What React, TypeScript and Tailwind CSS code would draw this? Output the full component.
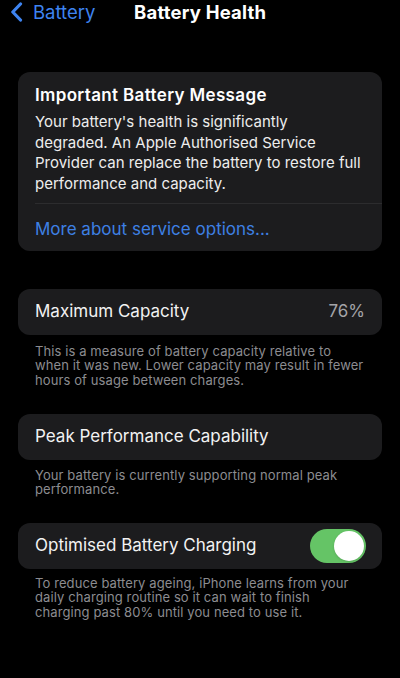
const font = { fontFamily: "Inter, 'Noto Sans', sans-serif" };

function Footer({ lines }: { lines: string[] }) {
  return (
    <p className="px-[35px] text-[13px] leading-[14.6px] tracking-[0.1px] text-[#8c8c90] whitespace-nowrap">
      {lines.map((l, i) => (
        <span key={i} className="block">
          {l}
        </span>
      ))}
    </p>
  );
}

export default function App() {
  return (
    <div
      className="w-[400px] h-[678px] bg-black text-[#f2f2f2] overflow-hidden"
      style={font}
    >
      {/* nav */}
      <div className="relative h-[24px] flex items-center">
        <div className="flex items-center pl-[10px] text-[#3e84f0]">
          <svg width="13" height="20" viewBox="0 0 13 20" fill="none">
            <path
              d="M10.5 2 L2.8 10 L10.5 18"
              stroke="currentColor"
              strokeWidth="3.2"
              strokeLinecap="round"
              strokeLinejoin="round"
            />
          </svg>
          <span className="ml-[10px] text-[18.5px] leading-[24px]">Battery</span>
        </div>
        <span className="absolute left-[134px] top-0 text-[18.5px] leading-[24px] font-bold text-white tracking-[0.2px]">
          Battery Health
        </span>
      </div>

      <div className="px-[18px] pt-[48px]">
        <div className="rounded-[12px] bg-[#1c1c1e]">
          <div className="px-[17px] pt-[12px] pb-[8px]">
            <h2 className="text-[17px] leading-[22px] font-semibold text-white tracking-[0.35px]">
              Important Battery Message
            </h2>
            <p className="mt-[6px] text-[15px] leading-[20.7px] text-[#ededed] whitespace-nowrap">
              <span className="block">Your battery's health is significantly</span>
              <span className="block">degraded. An Apple Authorised Service</span>
              <span className="block">Provider can replace the battery to restore full</span>
              <span className="block">performance and capacity.</span>
            </p>
          </div>
          <div className="ml-[17px] border-t border-[#2c2c2e]" />
          <div className="px-[17px] pt-[14px] pb-[11px] text-[17px] leading-[22px] text-[#3e80e4]">
            More about service options...
          </div>
        </div>

        <div className="mt-[38px] h-[46px] rounded-[12px] bg-[#1c1c1e] px-[17px] flex items-center justify-between text-[17px]">
          <span>Maximum Capacity</span>
          <span className="text-[#a4a4a8]">76%</span>
        </div>
      </div>
      <div className="mt-[9px]">
        <Footer
          lines={[
            "This is a measure of battery capacity relative to",
            "when it was new. Lower capacity may result in fewer",
            "hours of usage between charges.",
          ]}
        />
      </div>

      <div className="px-[18px] mt-[26px]">
        <div className="h-[46px] rounded-[12px] bg-[#1c1c1e] px-[17px] flex items-center text-[17px]">
          Peak Performance Capability
        </div>
      </div>
      <div className="mt-[8px]">
        <Footer
          lines={[
            "Your battery is currently supporting normal peak",
            "performance.",
          ]}
        />
      </div>

      <div className="px-[18px] mt-[26px]">
        <div className="h-[46px] rounded-[12px] bg-[#1c1c1e] pl-[17px] pr-[16px] flex items-center justify-between text-[17px]">
          <span>Optimised Battery Charging</span>
          <div className="w-[56px] h-[34px] rounded-full bg-[#65c466] flex items-center justify-end pr-[2px]">
            <div className="size-[30px] rounded-full bg-white shadow" />
          </div>
        </div>
      </div>
      <div className="mt-[7px]">
        <Footer
          lines={[
            "To reduce battery ageing, iPhone learns from your",
            "daily charging routine so it can wait to finish",
            "charging past 80% until you need to use it.",
          ]}
        />
      </div>
    </div>
  );
}
